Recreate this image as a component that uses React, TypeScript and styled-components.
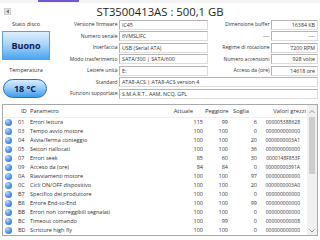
import styled, { createGlobalStyle } from 'styled-components';

const GlobalStyle = createGlobalStyle`
  html, body {
    margin: 0;
    padding: 0;
    background: #ffffff;
  }
  body {
    font-family: 'Open Sans', 'Noto Sans', sans-serif;
    color: #2b2b2b;
  }
`;

type Align = 'left' | 'right';

const Window = styled.div`
  width: 320px;
  height: 240px;
  overflow: hidden;
  background: #ffffff;
  display: flex;
  flex-direction: column;
`;

const TopStrip = styled.div`
  height: 3px;
  background: #f3f3f3;
  display: flex;
`;

const TabMark = styled.div`
  margin-left: 38px;
  width: 41px;
  height: 2px;
  background: #7357d6;
`;

const TitleBar = styled.div`
  height: 16px;
  display: flex;
  align-items: center;
  position: relative;
`;

const NavButton = styled.div`
  position: absolute;
  left: 4px;
  top: 5px;
  width: 7px;
  height: 7px;
  background: #e4e4e4;
  border: 1px solid #cfcfcf;
  box-sizing: border-box;
  display: flex;
  align-items: center;
  justify-content: center;
`;

const Title = styled.div`
  flex: 1;
  text-align: center;
  font-size: 11.3px;
  line-height: 16px;
  color: #1e1e1e;
  padding-top: 1px;
`;

const InfoArea = styled.div`
  display: grid;
  grid-template-columns: 52px 1fr;
  height: 81px;
`;

const StatusColumn = styled.div`
  display: flex;
  flex-direction: column;
  align-items: flex-start;
`;

const SmallLabel = styled.div`
  width: 52px;
  text-align: center;
  font-size: 5.5px;
  line-height: 11.5px;
  height: 11.5px;
  color: #333;
`;

const HealthButton = styled.div`
  margin-left: 2px;
  margin-top: 0.5px;
  width: 48px;
  height: 29px;
  box-sizing: border-box;
  border: 1px solid #5d9fe0;
  background: linear-gradient(#dceffd 0%, #abd5f8 45%, #4aa4ef 100%);
  display: flex;
  align-items: center;
  justify-content: center;
  font-weight: 700;
  font-size: 9px;
  color: #102050;
`;

const TempLabel = styled(SmallLabel)`
  margin-top: 5px;
`;

const TempPill = styled.div`
  margin-left: 3px;
  margin-top: 2px;
  width: 44px;
  height: 19px;
  box-sizing: border-box;
  border-radius: 10px;
  border: 1px solid #2a73c8;
  background: linear-gradient(#d8ecfd 0%, #9ccff7 45%, #3d9cec 100%);
  display: flex;
  align-items: center;
  justify-content: center;
  font-weight: 700;
  font-size: 9px;
  color: #102050;
`;

const FieldGrid = styled.div`
  display: grid;
  grid-template-columns: 67px 89px 63px 47px;
  grid-auto-rows: 11.5px;
`;

const FieldLabel = styled.div`
  font-size: 5.1px;
  text-align: right;
  padding-right: 1.5px;
  line-height: 11.5px;
  white-space: nowrap;
  color: #333;
`;

const FieldBox = styled.div<{ $align?: Align; $span?: number }>`
  align-self: center;
  height: 10px;
  box-sizing: border-box;
  border: 1px solid #b4b4b4;
  border-right-color: #dcdcdc;
  border-bottom-color: #dcdcdc;
  font-size: 5.3px;
  line-height: 8px;
  padding: 0 2px;
  white-space: nowrap;
  overflow: hidden;
  color: #333;
  text-align: ${({ $align = 'left' }) => $align};
  grid-column: ${({ $span }) => ($span ? `span ${$span}` : 'auto')};
`;

const TableFrame = styled.div`
  margin: 4px 2px 0 2px;
  height: 132px;
  box-sizing: border-box;
  border: 1px solid #a9a9a9;
  display: flex;
`;

const TableMain = styled.div`
  width: 304px;
  display: flex;
  flex-direction: column;
`;

const COLS = '15px 12px 130px 45px 25px 29px 48px';

const HeaderRow = styled.div`
  display: grid;
  grid-template-columns: ${COLS};
  height: 13px;
  border-bottom: 1px solid #f0f0f0;
  box-sizing: border-box;
`;

const HeaderCell = styled.div<{ $align?: Align; $pad?: number }>`
  font-size: 5.8px;
  line-height: 12px;
  white-space: nowrap;
  color: #333;
  text-align: ${({ $align = 'left' }) => $align};
  ${({ $align = 'left', $pad = 0 }) =>
    $align === 'right' ? `padding-right: ${$pad}px;` : `padding-left: ${$pad}px;`}
`;

const Row = styled.div`
  display: grid;
  grid-template-columns: ${COLS};
  height: 9px;
  align-items: center;
`;

const Cell = styled.div<{ $align?: Align; $pad?: number; $size?: number }>`
  font-size: ${({ $size = 5.5 }) => $size}px;
  line-height: 9px;
  white-space: nowrap;
  overflow: hidden;
  color: #333;
  text-align: ${({ $align = 'left' }) => $align};
  ${({ $align = 'left', $pad = 0 }) =>
    $align === 'right' ? `padding-right: ${$pad}px;` : `padding-left: ${$pad}px;`}
`;

const Dot = styled.div`
  margin-left: 2px;
  width: 7px;
  height: 7px;
  border-radius: 50%;
  background: radial-gradient(circle at 35% 30%, #b9dcff 0%, #5b9af0 45%, #2a63c9 100%);
`;

const ScrollBar = styled.div`
  width: 10px;
  background: #f0f0f0;
  display: flex;
  flex-direction: column;
  align-items: center;
`;

const ScrollArrow = styled.div<{ $h: number }>`
  height: ${({ $h }) => $h}px;
  width: 10px;
  display: flex;
  align-items: center;
  justify-content: center;
`;

const Thumb = styled.div`
  width: 6px;
  height: 57px;
  background: #cdcdcd;
`;

const Spacer = styled.div`
  flex: 1;
`;

const left = [
  ['Versione firmware', 'IC45'],
  ['Numero seriale', '6VMSLIFC'],
  ['Interfaccia', 'USB (Serial ATA)'],
  ['Modo trasferimento', 'SATA/300 | SATA/600'],
  ['Lettere unità', 'E:'],
];

const right = [
  ['Dimensione buffer', '16384 KB'],
  ['----', '----'],
  ['Regime di rotazione', '7200 RPM'],
  ['Numero accensioni', '928 volte'],
  ['Acceso da (ore)', '14618 ore'],
];

const rows: [string, string, number, number, number, string][] = [
  ['01', 'Errori lettura', 115, 99, 6, '000005388628'],
  ['03', 'Tempo avvio motore', 100, 100, 0, '000000000000'],
  ['04', 'Avvia/ferma conteggio', 100, 100, 20, '0000000003A1'],
  ['05', 'Settori riallocati', 100, 100, 36, '000000000000'],
  ['07', 'Errori seek', 85, 60, 30, '0000148F853F'],
  ['09', 'Acceso da (ore)', 84, 84, 0, '00000000391A'],
  ['0A', 'Riavviamenti motore', 100, 100, 97, '000000000000'],
  ['0C', 'Cicli ON/OFF dispositivo', 100, 100, 20, '0000000003A0'],
  ['B7', 'Specifico del produttore', 100, 100, 0, '000000000000'],
  ['B8', 'Errore End-to-End', 100, 100, 99, '000000000000'],
  ['BB', 'Errori non correggibili segnalati', 100, 100, 0, '000000000000'],
  ['BC', 'Timeout comando', 100, 99, 0, '000000000008'],
  ['BD', 'Scritture high fly', 100, 100, 0, '000000000000'],
];

const Arrow = ({ dir }: { dir: 'up' | 'down' | 'left' }) => {
  if (dir === 'left') {
    return (
      <svg width="5" height="5" viewBox="0 0 5 5">
        <polygon points="4,0.5 4,4.5 1,2.5" fill="#7a7a7a" />
      </svg>
    );
  }
  const pts = dir === 'up' ? '0.5,4 3,1.5 5.5,4' : '0.5,1.5 3,4 5.5,1.5';
  return (
    <svg width="6" height="5" viewBox="0 0 6 5">
      <polyline points={pts} fill="none" stroke="#777" strokeWidth="0.8" />
    </svg>
  );
};

export default function App() {
  return (
    <Window>
      <GlobalStyle />
      <TopStrip>
        <TabMark />
      </TopStrip>
      <TitleBar>
        <NavButton>
          <Arrow dir="left" />
        </NavButton>
        <Title>ST3500413AS : 500,1 GB</Title>
      </TitleBar>
      <InfoArea>
        <StatusColumn>
          <SmallLabel>Stato disco</SmallLabel>
          <HealthButton>Buono</HealthButton>
          <TempLabel>Temperatura</TempLabel>
          <TempPill>18 °C</TempPill>
        </StatusColumn>
        <FieldGrid>
          {left.flatMap(([l, v], i) => [
            <FieldLabel key={`l${i}`}>{l}</FieldLabel>,
            <FieldBox key={`lv${i}`}>{v}</FieldBox>,
            <FieldLabel key={`r${i}`}>{right[i][0]}</FieldLabel>,
            <FieldBox key={`rv${i}`} $align="right">
              {right[i][1]}
            </FieldBox>,
          ])}
          <FieldLabel>Standard</FieldLabel>
          <FieldBox $span={3}>ATA8-ACS | ATA8-ACS version 4</FieldBox>
          <FieldLabel>Funzioni supportate</FieldLabel>
          <FieldBox $span={3}>S.M.A.R.T., AAM, NCQ, GPL</FieldBox>
        </FieldGrid>
      </InfoArea>
      <TableFrame>
        <TableMain>
          <HeaderRow>
            <HeaderCell />
            <HeaderCell $pad={3}>ID</HeaderCell>
            <HeaderCell>Parametro</HeaderCell>
            <HeaderCell $align="right" $pad={12}>
              Attuale
            </HeaderCell>
            <HeaderCell $align="right" $pad={10}>
              Peggiore
            </HeaderCell>
            <HeaderCell $align="right" $pad={10}>
              Soglia
            </HeaderCell>
            <HeaderCell $align="right" $pad={1}>
              Valori grezzi
            </HeaderCell>
          </HeaderRow>
          {rows.map(([id, name, cur, worst, thr, raw]) => (
            <Row key={id}>
              <Dot />
              <Cell>{id}</Cell>
              <Cell>{name}</Cell>
              <Cell $align="right" $pad={2}>
                {cur}
              </Cell>
              <Cell $align="right" $pad={2}>
                {worst}
              </Cell>
              <Cell $align="right" $pad={2}>
                {thr}
              </Cell>
              <Cell $align="right" $pad={7} $size={5}>
                {raw}
              </Cell>
            </Row>
          ))}
        </TableMain>
        <ScrollBar>
          <ScrollArrow $h={12}>
            <Arrow dir="up" />
          </ScrollArrow>
          <Thumb />
          <Spacer />
          <ScrollArrow $h={9}>
            <Arrow dir="down" />
          </ScrollArrow>
        </ScrollBar>
      </TableFrame>
    </Window>
  );
}
